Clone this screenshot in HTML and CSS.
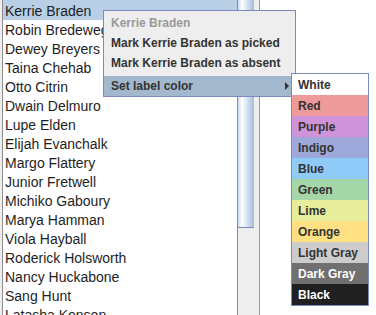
FILE: index.html
```html
<!DOCTYPE html>
<html>
<head>
<meta charset="utf-8">
<link rel="stylesheet" href="styles.css">
</head>
<body>
<div class="app">
  <div class="gutter"></div>
  <ul class="list">
    <li class="row selected">Kerrie Braden</li>
    <li class="row">Robin Bredeweg</li>
    <li class="row">Dewey Breyers</li>
    <li class="row">Taina Chehab</li>
    <li class="row">Otto Citrin</li>
    <li class="row">Dwain Delmuro</li>
    <li class="row">Lupe Elden</li>
    <li class="row">Elijah Evanchalk</li>
    <li class="row">Margo Flattery</li>
    <li class="row">Junior Fretwell</li>
    <li class="row">Michiko Gaboury</li>
    <li class="row">Marya Hamman</li>
    <li class="row">Viola Hayball</li>
    <li class="row">Roderick Holsworth</li>
    <li class="row">Nancy Huckabone</li>
    <li class="row">Sang Hunt</li>
    <li class="row">Latasha Kenson</li>
  </ul>
  <div class="scrollbar">
    <div class="track"><div class="thumb"></div></div>
    <div class="edge"></div>
  </div>
</div>

<div class="popup">
  <div class="mi title">Kerrie Braden</div>
  <div class="mi">Mark Kerrie Braden as picked</div>
  <div class="mi">Mark Kerrie Braden as absent</div>
  <div class="mi sub armed">Set label color<span class="arrow"></span></div>
</div>

<div class="submenu">
  <div class="ci c-white">White</div>
  <div class="ci c-red">Red</div>
  <div class="ci c-purple">Purple</div>
  <div class="ci c-indigo">Indigo</div>
  <div class="ci c-blue">Blue</div>
  <div class="ci c-green">Green</div>
  <div class="ci c-lime">Lime</div>
  <div class="ci c-orange">Orange</div>
  <div class="ci c-lgray">Light Gray</div>
  <div class="ci c-dgray">Dark Gray</div>
  <div class="ci c-black">Black</div>
</div>
</body>
</html>
```

FILE: styles.css
```css
html, body {
  margin: 0;
  padding: 0;
  background: #ffffff;
  width: 376px;
  height: 315px;
  overflow: hidden;
  position: relative;
  font-family: "Liberation Sans", Arial, sans-serif;
}

.app {
  display: flex;
  height: 315px;
  overflow: hidden;
}

.gutter {
  width: 2px;
  background: #eeeeee;
  border-right: 1px solid #8e8e8e;
  flex: none;
}

.list {
  list-style: none;
  margin: 0;
  padding: 1px 0 0 0;
  width: 234px;
  flex: none;
  background: #ffffff;
}

.row {
  height: 19px;
  line-height: 21px;
  padding-left: 2px;
  font-size: 14px;
  color: #1e1e1e;
  white-space: nowrap;
}

.row.selected {
  background: #b8cfe5;
  box-shadow: 0 -1px 0 #b8cfe5;
}

.scrollbar {
  display: flex;
  flex: none;
  width: 23px;
}

.track {
  width: 16px;
  background: #eeeeee;
  border-left: 1px solid #7a8abf;
}

.thumb {
  height: 227px;
  border-bottom: 1px solid #7a8abf;
  background: linear-gradient(to right, #c9dbee 0%, #ffffff 25%, #e6eef7 45%, #c5d7ea 70%, #a9bed3 100%);
}

.edge {
  flex: 1;
  background: #eeeeee;
  border-right: 1px solid #9a9a9a;
}

.popup {
  position: absolute;
  left: 103px;
  top: 10px;
  width: 191px;
  background: #eeeeee;
  border: 1px solid #7a8abf;
  padding: 2px 0 0 0;
}

.mi {
  height: 20px;
  line-height: 20px;
  padding-left: 7px;
  font-size: 12px;
  font-weight: bold;
  color: #333333;
  white-space: nowrap;
  position: relative;
}

.mi.title {
  color: #999999;
}

.mi.sub {
  margin-top: 3px;
}

.mi.armed {
  background: #a3b8cc;
}

.arrow {
  position: absolute;
  left: 181px;
  top: 6px;
  width: 0;
  height: 0;
  border-left: 4px solid #333333;
  border-top: 4px solid transparent;
  border-bottom: 4px solid transparent;
}

.submenu {
  position: absolute;
  left: 291px;
  top: 73px;
  width: 76px;
  background: #eeeeee;
  border: 1px solid #7a8abf;
}

.ci {
  height: 21px;
  line-height: 22px;
  padding-left: 6px;
  font-size: 12px;
  font-weight: bold;
  color: #333333;
  white-space: nowrap;
}

.c-white { background: #ffffff; }
.c-red { background: #ef9a9a; }
.c-purple { background: #ce93d8; }
.c-indigo { background: #9fa8da; }
.c-blue { background: #90caf9; }
.c-green { background: #a5d6a7; }
.c-lime { background: #e6ee9c; }
.c-orange { background: #ffe082; }
.c-lgray { background: #cccccc; }
.c-dgray { background: #707070; color: #ffffff; }
.c-black { background: #202020; color: #ffffff; }
```
